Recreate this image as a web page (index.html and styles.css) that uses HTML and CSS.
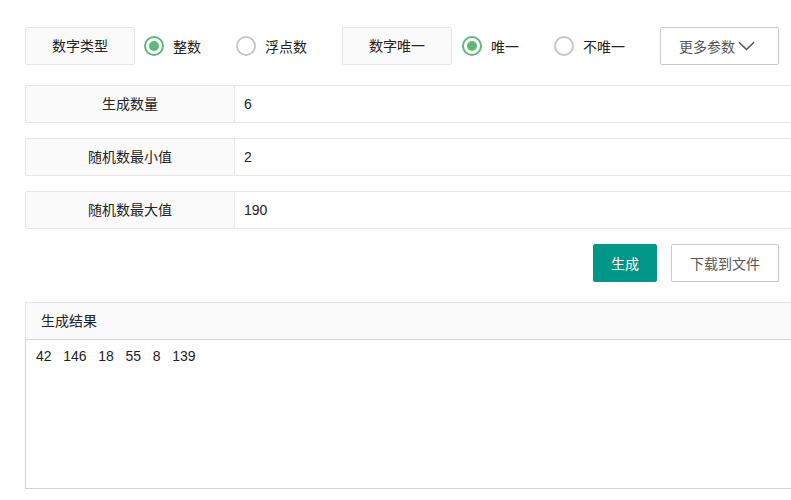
FILE: index.html
```html
<!DOCTYPE html>
<html lang="zh-CN">
<head>
<meta charset="utf-8">
<title>随机数生成</title>
<link rel="stylesheet" href="styles.css">
</head>
<body>
<div class="page">
  <div class="top-row">
    <div class="tag">数字类型</div>
    <label class="opt"><span class="radio on"></span><span>整数</span></label>
    <label class="opt"><span class="radio"></span><span>浮点数</span></label>
    <div class="tag tag-unique">数字唯一</div>
    <label class="opt"><span class="radio on"></span><span>唯一</span></label>
    <label class="opt"><span class="radio"></span><span>不唯一</span></label>
    <button class="btn btn-plain more">更多参数<svg class="chev" width="17" height="10" viewBox="0 0 17 10"><path d="M1 1.2 L8.5 8.5 L16 1.2" fill="none" stroke="#555" stroke-width="1.6"/></svg></button>
  </div>

  <div class="field">
    <div class="field-label">生成数量</div>
    <div class="field-input">6</div>
  </div>
  <div class="field">
    <div class="field-label">随机数最小值</div>
    <div class="field-input">2</div>
  </div>
  <div class="field">
    <div class="field-label">随机数最大值</div>
    <div class="field-input">190</div>
  </div>

  <div class="actions">
    <button class="btn btn-main">生成</button>
    <button class="btn btn-plain">下载到文件</button>
  </div>

  <div class="result">
    <div class="result-head">生成结果</div>
    <div class="result-body">42   146   18   55   8   139</div>
  </div>
</div>
</body>
</html>
```

FILE: styles.css
```css
html, body {
  margin: 0;
  padding: 0;
  background: #fff;
  overflow: hidden;
}
body {
  font-family: "Liberation Sans", "Noto Sans CJK SC", sans-serif;
  font-size: 14px;
  color: #222;
}
.page {
  width: 754px;
  padding: 27px 0 0 25px;
}
.top-row {
  display: flex;
  align-items: center;
  gap: 9px;
  height: 38px;
  width: 800px;
}
.tag {
  box-sizing: border-box;
  width: 110px;
  height: 38px;
  line-height: 36px;
  text-align: center;
  background: #fafafa;
  border: 1px solid #e6e6e6;
  border-radius: 2px;
  color: #222;
}
.tag-unique {
  margin-right: 1px;
}
.opt {
  display: flex;
  align-items: center;
  gap: 9px;
  margin-right: 26px;
  color: #222;
}
.radio {
  box-sizing: border-box;
  width: 20px;
  height: 20px;
  border-radius: 50%;
  border: 2px solid #c6c6c6;
  display: flex;
  align-items: center;
  justify-content: center;
}
.radio.on {
  border-color: #5fb878;
}
.radio.on::after {
  content: "";
  width: 10px;
  height: 10px;
  border-radius: 50%;
  background: #5fb878;
}
.btn {
  box-sizing: border-box;
  height: 38px;
  font-family: inherit;
  font-size: 14px;
  border-radius: 2px;
  padding: 0 18px;
  display: inline-flex;
  align-items: center;
  justify-content: center;
  cursor: pointer;
}
.btn-plain {
  background: #fff;
  border: 1px solid #c9c9c9;
  color: #555;
}
.btn-main {
  width: 64px;
  padding: 0;
  background: #009688;
  border: 1px solid #009688;
  color: #fff;
}
.more {
  width: 119px;
  padding: 0 0 0 18px;
  justify-content: flex-start;
}
.chev {
  margin-left: 3px;
}
.field {
  display: flex;
  width: 800px;
  height: 38px;
  margin-top: 15px;
}
.top-row + .field {
  margin-top: 20px;
}
.field-label {
  box-sizing: border-box;
  width: 210px;
  height: 38px;
  line-height: 36px;
  text-align: center;
  background: #fafafa;
  border: 1px solid #e6e6e6;
  border-radius: 2px 0 0 2px;
}
.field-input {
  box-sizing: border-box;
  flex: 1;
  height: 38px;
  line-height: 36px;
  padding-left: 9px;
  border: 1px solid #e6e6e6;
  border-left: none;
}
.actions {
  display: flex;
  justify-content: flex-end;
  gap: 14px;
  margin-top: 15px;
}
.result {
  width: 800px;
  margin-top: 20px;
}
.result-head {
  box-sizing: border-box;
  height: 37px;
  line-height: 36px;
  padding-left: 15px;
  background: #fafafa;
  border: 1px solid #e6e6e6;
  border-bottom: none;
}
.result-body {
  box-sizing: border-box;
  height: 150px;
  padding: 6px 10px;
  line-height: 20px;
  border: 1px solid #d2d2d2;
  white-space: pre;
}
```
